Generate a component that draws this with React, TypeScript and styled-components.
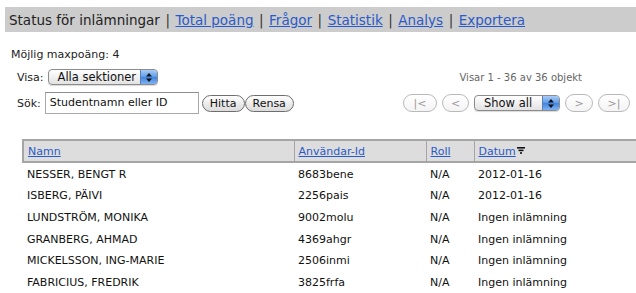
import styled, { createGlobalStyle } from 'styled-components';

const GlobalStyle = createGlobalStyle`
  html, body {
    margin: 0;
    padding: 0;
    background: #fff;
    overflow: hidden;
  }
  body {
    font-family: "DejaVu Sans", Verdana, sans-serif;
    color: #222;
  }
`;

const Page = styled.div`
  width: 636px;
  padding-top: 7px;
`;

const TitleBar = styled.div`
  margin-left: 5px;
  height: 25px;
  background: #cccccc;
  display: flex;
  align-items: center;
  padding-left: 4px;
  font-size: 13.5px;
  color: #222;
  white-space: nowrap;
`;

const Sep = styled.span`
  margin: 0 5.5px;
  color: #333;
`;

const NavLink = styled.a`
  color: #2a5ac8;
  text-decoration: underline;
  cursor: pointer;
`;

const MaxPoints = styled.div`
  font-size: 11px;
  margin: 16px 0 0 11px;
  line-height: 14px;
`;

const ControlsRow = styled.div`
  display: flex;
  justify-content: space-between;
  margin-top: 7px;
`;

const LeftControls = styled.div`
  display: flex;
  flex-direction: column;
  gap: 7px;
  padding-left: 17px;
`;

const FieldRow = styled.div`
  display: flex;
  align-items: center;
  gap: 4px;
  font-size: 11px;
`;

const AquaSelect = styled.div<{ $width: number }>`
  position: relative;
  width: ${(p) => p.$width}px;
  height: 16px;
  box-sizing: border-box;
  border: 1px solid #8c8c8c;
  border-radius: 4px;
  background: linear-gradient(#ffffff, #f1f1f1 50%, #e2e2e2);
  font-size: 11.5px;
  line-height: 14px;
  padding-left: 9px;
  color: #111;
  overflow: hidden;
  box-shadow: 0 1px 1px rgba(0, 0, 0, 0.15);
`;

const AquaArrows = styled.div`
  position: absolute;
  right: 0;
  top: 0;
  bottom: 0;
  width: 16px;
  background: linear-gradient(#a9ccf6, #5d9be8 50%, #3e82e0 51%, #7fb3f2);
  border-left: 1px solid #5a7fb3;
  display: flex;
  align-items: center;
  justify-content: center;
`;

const TextInput = styled.div`
  width: 154px;
  height: 22px;
  box-sizing: border-box;
  border: 1px solid #a8a8a8;
  border-top-color: #8e8e8e;
  padding-left: 4px;
  font-size: 11px;
  line-height: 20px;
  color: #111;
  background: #fff;
`;

const PillButton = styled.button<{ $disabled?: boolean }>`
  height: 17px;
  box-sizing: border-box;
  padding: 0 7px;
  border: 1px solid ${(p) => (p.$disabled ? '#b9b9b9' : '#6e6e6e')};
  border-radius: 9px;
  background: ${(p) =>
    p.$disabled ? 'linear-gradient(#ffffff, #f4f4f4)' : 'linear-gradient(#ffffff, #ececec 50%, #dcdcdc)'};
  font-family: "DejaVu Sans", Verdana, sans-serif;
  font-size: 11px;
  line-height: 15px;
  color: ${(p) => (p.$disabled ? '#9a9a9a' : '#111')};
  cursor: pointer;
`;

const SearchButtons = styled.div`
  display: flex;
  margin-left: -1px;
  gap: 0;
`;

const RightControls = styled.div`
  display: flex;
  flex-direction: column;
  align-items: flex-end;
  padding-right: 6px;
  padding-top: 2px;
`;

const ShowingText = styled.div`
  font-size: 10px;
  color: #666;
  margin-right: 48px;
  line-height: 14px;
`;

const Pager = styled.div`
  display: flex;
  align-items: center;
  gap: 5px;
  margin-top: 9px;
`;

const PagerButton = styled(PillButton)<{ $w: number }>`
  width: ${(p) => p.$w}px;
  height: 18px;
  padding: 0;
  font-size: 11px;
`;

const Table = styled.table`
  margin: 25px 0 0 22px;
  width: 620px;
  border-collapse: collapse;
  font-size: 11px;
  table-layout: fixed;
`;

const HeadCell = styled.th<{ $w: number }>`
  width: ${(p) => p.$w}px;
  height: 22px;
  box-sizing: border-box;
  background: #dddddd;
  border: 2px solid #a5a5a5;
  border-left-width: 1px;
  border-right-width: 1px;
  text-align: left;
  font-weight: normal;
  padding: 0 4px;
  &:first-child {
    border-left-width: 2px;
  }
`;

const HeadLink = styled.a`
  color: #2a5ac8;
  text-decoration: underline;
`;

const Cell = styled.td`
  padding: 4.8px 4px 2.8px;
  line-height: 14px;
  color: #111;
  white-space: nowrap;
`;

const SortIcon = () => (
  <svg width="8" height="7" viewBox="0 0 8 7" style={{ marginLeft: 1, verticalAlign: 1 }}>
    <rect x="0" y="0" width="8" height="1.6" fill="#111" />
    <rect x="1.5" y="2.6" width="5" height="1.6" fill="#111" />
    <rect x="3" y="5.2" width="2" height="1.6" fill="#111" />
  </svg>
);

const Arrows = () => (
  <svg width="6" height="9" viewBox="0 0 6 9">
    <path d="M3 0 L6 3.5 L0 3.5 Z" fill="#111" />
    <path d="M3 9 L6 5.5 L0 5.5 Z" fill="#111" />
  </svg>
);

const rows = [
  ['NESSER, BENGT R', '8683bene', 'N/A', '2012-01-16'],
  ['ISBERG, PÄIVI', '2256pais', 'N/A', '2012-01-16'],
  ['LUNDSTRÖM, MONIKA', '9002molu', 'N/A', 'Ingen inlämning'],
  ['GRANBERG, AHMAD', '4369ahgr', 'N/A', 'Ingen inlämning'],
  ['MICKELSSON, ING-MARIE', '2506inmi', 'N/A', 'Ingen inlämning'],
  ['FABRICIUS, FREDRIK', '3825frfa', 'N/A', 'Ingen inlämning'],
];

const navItems = ['Total poäng', 'Frågor', 'Statistik', 'Analys', 'Exportera'];

export default function App() {
  return (
    <Page>
      <GlobalStyle />
      <TitleBar>
        Status för inlämningar
        {navItems.map((n) => (
          <span key={n}>
            <Sep>|</Sep>
            <NavLink>{n}</NavLink>
          </span>
        ))}
      </TitleBar>

      <MaxPoints>Möjlig maxpoäng: 4</MaxPoints>

      <ControlsRow>
        <LeftControls>
          <FieldRow>
            <span>Visa:</span>
            <AquaSelect $width={110}>
              Alla sektioner
              <AquaArrows>
                <Arrows />
              </AquaArrows>
            </AquaSelect>
          </FieldRow>
          <FieldRow>
            <span>Sök:</span>
            <TextInput>Studentnamn eller ID</TextInput>
            <SearchButtons>
              <PillButton>Hitta</PillButton>
              <PillButton>Rensa</PillButton>
            </SearchButtons>
          </FieldRow>
        </LeftControls>

        <RightControls>
          <ShowingText>Visar 1 - 36 av 36 objekt</ShowingText>
          <Pager>
            <PagerButton $disabled $w={34}>|&lt;</PagerButton>
            <PagerButton $disabled $w={27}>&lt;</PagerButton>
            <AquaSelect $width={86}>
              Show all
              <AquaArrows>
                <Arrows />
              </AquaArrows>
            </AquaSelect>
            <PagerButton $disabled $w={28}>&gt;</PagerButton>
            <PagerButton $disabled $w={32}>&gt;|</PagerButton>
          </Pager>
        </RightControls>
      </ControlsRow>

      <Table>
        <thead>
          <tr>
            <HeadCell $w={271}>
              <HeadLink>Namn</HeadLink>
            </HeadCell>
            <HeadCell $w={132}>
              <HeadLink>Användar-Id</HeadLink>
            </HeadCell>
            <HeadCell $w={48}>
              <HeadLink>Roll</HeadLink>
            </HeadCell>
            <HeadCell $w={169}>
              <HeadLink>Datum</HeadLink>
              <SortIcon />
            </HeadCell>
          </tr>
        </thead>
        <tbody>
          {rows.map((r) => (
            <tr key={r[1]}>
              {r.map((c, i) => (
                <Cell key={i}>{c}</Cell>
              ))}
            </tr>
          ))}
        </tbody>
      </Table>
    </Page>
  );
}
